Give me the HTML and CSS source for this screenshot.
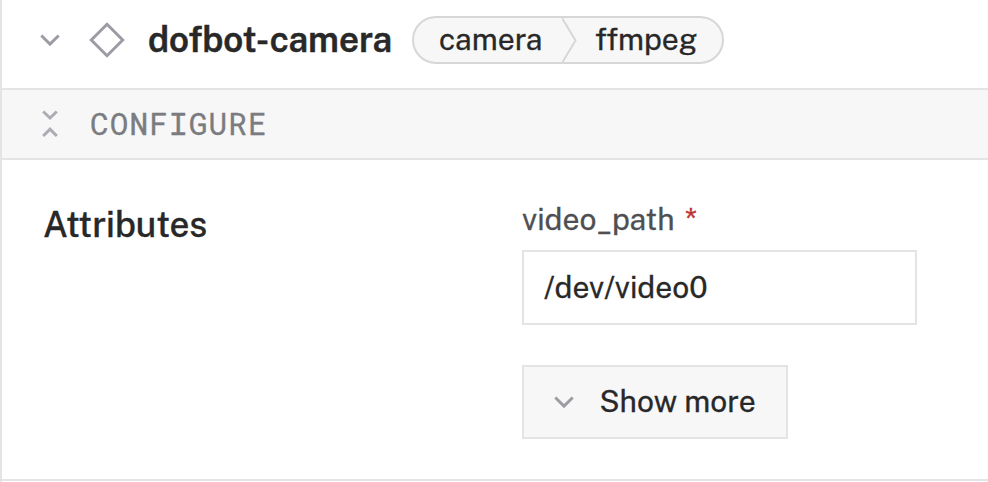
FILE: index.html
```html
<!DOCTYPE html>
<html lang="en">
<head>
<meta charset="utf-8">
<title>dofbot-camera</title>
<link rel="stylesheet" href="styles.css">
</head>
<body>
<main class="card">
  <header class="card-header">
    <svg class="chevron" viewBox="0 0 20 13"><path d="M1.3 1.5 10 10.1 18.7 1.5"/></svg>
    <svg class="diamond" viewBox="0 0 36 36"><path d="M18 2.3 33.7 18 18 33.7 2.3 18Z"/></svg>
    <h1 class="name">dofbot-camera</h1>
    <div class="pill">
      <span class="pill-type">camera</span>
      <svg class="pill-divider" viewBox="0 0 16 46"><path d="M0 0 13.5 22.5 0 45"/></svg>
      <span class="pill-model">ffmpeg</span>
    </div>
  </header>
  <div class="section-bar">
    <svg class="collapse" viewBox="0 0 16 28"><path d="M1.2 1.5 8 8 14.8 1.5M1.2 26 8 19.2 14.8 26"/></svg>
    <span class="section-title">CONFIGURE</span>
  </div>
  <section class="content">
    <h2 class="heading">Attributes</h2>
    <div class="fields">
      <label class="label" for="path"><span>video_path</span><span class="required">*</span></label>
      <input class="input" id="path" type="text" value="/dev/video0">
      <button class="more" type="button">
        <svg class="chevron" viewBox="0 0 20 13"><path d="M1.3 1.5 10 10.1 18.7 1.5"/></svg>
        <span class="more-text">Show more</span>
      </button>
    </div>
  </section>
</main>
</body>
</html>
```
FILE: styles.css
```css
* { box-sizing: border-box; }
body {
  margin: 0;
  background: #fff;
  color: #282829;
  font-family: "Public Sans", Roboto, "Liberation Sans", sans-serif;
  font-size: 30px;
  overflow: hidden;
  -webkit-text-stroke: 0.3px currentColor;
}
.card { height: 482px; border-left: 2px solid #e4e4e6; }
svg { display: block; flex: none; fill: none; stroke: #9c9ca4; }
h1, h2 { margin: 0; }
.card-header {
  display: flex;
  align-items: center;
  height: 88px;
  padding: 0 0 8px 38px;
}
.chevron { width: 20px; height: 13px; stroke-width: 3; }
.diamond { width: 36px; height: 36px; margin-left: 29px; stroke-width: 3; }
.name {
  width: 243px;
  margin-left: 23px;
  padding-bottom: 1px;
  font-size: 35px;
  font-weight: 600;
  line-height: 42px;
  letter-spacing: -0.05px;
  white-space: nowrap;
  -webkit-text-stroke-width: 0.5px;
}
.pill {
  display: flex;
  width: 312px;
  height: 48px;
  margin-left: 21px;
  padding-left: 25px;
  border: 2px solid #d7d7d9;
  border-radius: 24px;
  background: #f7f7f8;
  line-height: 42px;
  white-space: nowrap;
}
.pill-type { width: 123px; }
.pill-divider { width: 16px; height: 46px; stroke: #d7d7d9; stroke-width: 2; }
.pill-model { margin-left: 17px; }
.section-bar {
  display: flex;
  align-items: center;
  height: 72px;
  padding-left: 40px;
  border-top: 2px solid #e4e4e6;
  border-bottom: 2px solid #e4e4e6;
  background: #f7f7f8;
}
.collapse { width: 16px; height: 28px; stroke: #acacb3; stroke-width: 3; }
.section-title {
  margin-left: 32px;
  padding-bottom: 2px;
  color: #7a7c80;
  font-family: "Roboto Mono", "Liberation Mono", monospace;
  font-size: 31px;
  line-height: 40px;
  letter-spacing: 1.15px;
  -webkit-text-stroke-width: 0.35px;
}
.content {
  display: flex;
  height: 321px;
  padding-left: 41px;
  border-bottom: 2px solid #e4e4e6;
}
.heading {
  width: 479px;
  padding-top: 43px;
  font-size: 35px;
  font-weight: 500;
  line-height: 44px;
  letter-spacing: -0.05px;
}
.fields { padding-top: 41px; }
.label { display: flex; height: 36px; line-height: 36px; color: #4e4f52; }
.label > span:first-child { width: 163px; }
.required { color: #be3536; }
.input {
  display: block;
  width: 395px;
  height: 75px;
  margin-top: 13px;
  padding: 0 20px 2px;
  border: 2px solid #e4e4e6;
  border-radius: 0;
  background: #fff;
  color: inherit;
  font: inherit;
}
.more {
  display: flex;
  align-items: center;
  width: 266px;
  height: 74px;
  margin-top: 40px;
  padding: 0 0 0 30px;
  border: 2px solid #e4e4e6;
  background: #f7f7f8;
  color: inherit;
  font: inherit;
  white-space: nowrap;
}
.more-text { margin-left: 25.5px; padding-bottom: 2px; }
```
